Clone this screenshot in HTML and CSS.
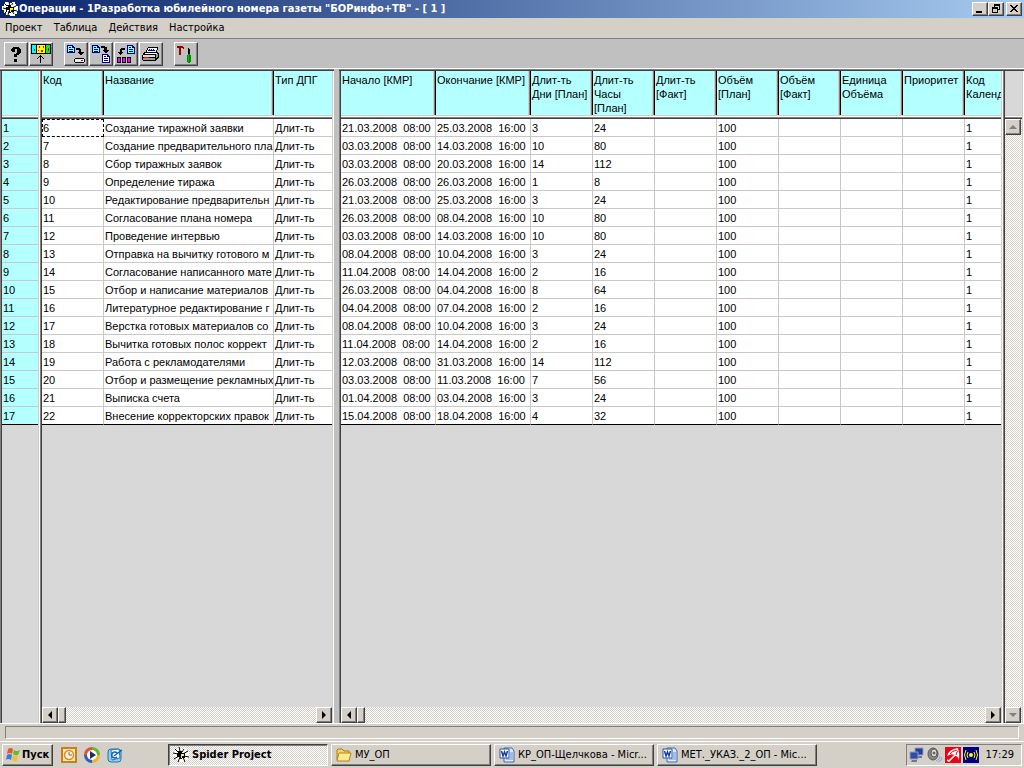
FILE: index.html
```html
<!DOCTYPE html>
<html lang="ru">
<head>
<meta charset="utf-8">
<title>Операции</title>
<link rel="stylesheet" href="styles.css">
</head>
<body>
<header class="titlebar">
  <svg class="icon" viewBox="0 0 16 16"><path d="M3 1h4v1h3V1h3v2h1v2h2v5h-1v3h-2v2H8v-1H4v-2H2V9H0V5h2V3h1z" fill="#fff"/><path d="M3 3l3 3M7 1l1 4M11 2L9 5M14 5l-4 2M1 7l4 1M3 12l3-3M6 14l1-4M12 13l-2-3M15 10l-4-1" stroke="#000"/><path d="M5 4h4v2h3v5H9v1H7v-2H4V6h1z"/><path d="M8 7h3v2H9v2H8z" fill="#ff0"/><path d="M5 5h1v1H5zM9 4h1v1H9zM5 9h2v1H5z" fill="#fff"/></svg>
  <h1 class="title">Операции - 1Разработка юбилейного номера газеты "БОРинфо+ТВ" - [ 1 ]</h1>
  <div class="window-buttons">
    <button class="win" aria-label="Свернуть"><svg viewBox="0 0 12 10"><path d="M2 7h6v2H2z"/></svg></button>
    <button class="win" aria-label="Восстановить"><svg viewBox="0 0 12 10"><path d="M4 0h6v6H8V5h1V2H5v1H4zM2 3h6v6H2zM3 5v3h4V5z" fill-rule="evenodd"/></svg></button>
    <button class="win close" aria-label="Закрыть"><svg viewBox="0 0 12 10"><path d="M2 1h2v1h1v1h2V2h1V1h2v1H9v1H8v1H7v1h1v1h1v1h1v1H8V7H7V6H5v1H4v1H2V7h1V6h1V5h1V4H4V3H3V2H2z"/></svg></button>
  </div>
</header>
<nav class="menu">
  <button>Проект</button><button>Таблица</button><button>Действия</button><button>Настройка</button>
</nav>
<div class="toolbar">
  <div class="group">
    <button class="tool" aria-label="Справка"><svg viewBox="0 0 20 20"><path d="M7 3h6v1h1v1h1v4h-1v1h-1v1h-2v2H8v-3h2V9h1V5H9v3H6V7H5V5h1V4h1zM8 15h3v3H8z"/></svg></button>
    <button class="tool" aria-label="Столбцы"><svg viewBox="0 0 20 20"><path d="M0 0h20v10H0z"/><path d="M1 1h4v8H1z" fill="#0ff"/><path d="M6 1h8v8H6z" fill="#ff0"/><path d="M15 1h4v8h-4z" fill="#0e3"/><path d="M3 5h1v2H3zM8 2h1v2H8zM12 2h1v2h-1zM7 6h1v1H7zM10 6h2v2h-2zM17 4h1v3h-1z" fill="#e00"/><path d="M9 11h1v1h1v1h1v1h1v1h-1v-1h-1v-1h-1v6H9v-6H8v1H7v1H6v-1h1v-1h1v-1h1z"/></svg></button>
  </div>
  <div class="group">
    <button class="tool" aria-label="Сохранить"><svg viewBox="0 0 20 20"><path d="M1 1h6v1h1v1h1v6H1z" fill="#008"/><path d="M2 2h4v2h2v4H2z" fill="#8ff"/><path d="M3 3h2v1H3zM3 5h4v1H3zM3 7h4v1H3z" fill="#008"/><path d="M10 4h4v1h1v3h3v1h-1v1h-1v1h-2v-1h-1V9h-1V8h1V6h-3z"/><path d="M9 14h9v1h1v3h-1v1H9v-1H8v-3h1z"/><path d="M9 15h9v3H9z" fill="#eee"/><path d="M15 16h2v1h-2z" fill="#c00"/></svg></button>
    <button class="tool" aria-label="Копировать"><svg viewBox="0 0 20 20"><path d="M1 1h6v1h1v1h1v6H1z" fill="#008"/><path d="M2 2h4v2h2v4H2z" fill="#8ff"/><path d="M3 3h2v1H3zM3 5h4v1H3zM3 7h4v1H3z" fill="#008"/><path d="M10 2h4v1h2v3h2v1h-1v1h-1v1h-2V8h-1V7h-1V6h1V4h-3z"/><path d="M11 10h6v1h1v1h1v7h-8z" fill="#008"/><path d="M12 11h4v2h2v5h-6z" fill="#fff"/><path d="M13 12h2v1h-2zM13 14h4v1h-4zM13 16h4v1h-4z" fill="#008"/></svg></button>
    <button class="tool" aria-label="В столбцы"><svg viewBox="0 0 20 20"><path d="M11 1h6v1h1v1h1v7h-8z" fill="#008"/><path d="M12 2h4v2h2v5h-6z" fill="#8ff"/><path d="M13 3h2v1h-2zM13 5h4v1h-4zM13 7h4v1h-4z" fill="#008"/><path d="M9 4H5v1H4v3H2v1h1v1h1v1h1v-1h1V9h1V8H6V6h3z"/><path d="M1 13h4v6H1zM6 13h4v6H6zM11 13h4v6h-4z"/><path d="M2 14h2v4H2zM7 14h2v4H7zM12 14h2v4h-2z" fill="#f0f"/></svg></button>
    <button class="tool" aria-label="Печать"><svg viewBox="0 0 20 20"><path d="M7 3h10v2h-1v3H5V6h1V4h1z" fill="#fff"/><path d="M7 3h10v1H7zM6 4h1v2H6zM5 6h1v2H5zM16 4h1v2h-1zM15 6h1v2h-1z"/><path d="M8 6V5h1v1h1V5h1v1h1V5h1v1h1v1H7V6z" fill="#00a"/><path d="M3 8h14v1h1v5h-1v1h-1v1h-1v1H2v-1H1v-5h1V9h1z"/><path d="M4 9h12v1H3z" fill="#fff"/><path d="M2 11h12v2H2z" fill="#ddd"/><path d="M2 14h12v2H2zM15 10h2v3h-1v1h-1z" fill="#999"/><path d="M3 13h5v1H3z" fill="#e00"/></svg></button>
  </div>
  <div class="group">
    <button class="tool" aria-label="Инструменты"><svg viewBox="0 0 20 20"><path d="M1 2h6v1h1v2H7V4H5v7H3V4H1z" fill="#900"/><path d="M12 4h1v1h1v5h-2z"/><path d="M12 10h2v1h1v7h-1v1h-2v-1h-1v-7h1z" fill="#080"/><path d="M12 11h1v7h-1z" fill="#0b0"/></svg></button>
  </div>
</div>
<main class="sheet">
  <section class="pane"><table class="grid numbers"><thead><tr><th scope="col"></th></tr></thead><tbody id="numbers"></tbody></table></section>
  <section class="pane">
    <table class="grid"><colgroup><col class="code"><col class="name"><col></colgroup>
      <thead><tr><th>Код</th><th>Название</th><th>Тип ДПГ</th></tr></thead><tbody id="names"></tbody></table>
    <div class="hscroll"><button class="sb" aria-label="Влево"><i class="left"></i></button><span class="thumb"></span><button class="sb end" aria-label="Вправо"><i class="right"></i></button></div>
  </section>
  <div class="splitter"></div>
  <section class="pane">
    <table class="grid"><colgroup><col class="date"><col class="date"><col class="code"><col class="code"><col class="code"><col class="code"><col class="code"><col class="code"><col class="code"><col></colgroup>
      <thead><tr><th>Начало [КМР]</th><th>Окончание [КМР]</th><th>Длит-ть<br>Дни [План]</th><th>Длит-ть<br>Часы<br>[План]</th><th>Длит-ть<br>[Факт]</th><th>Объём<br>[План]</th><th>Объём<br>[Факт]</th><th>Единица<br>Объёма</th><th>Приоритет</th><th>Код<br>Календ</th></tr></thead><tbody id="values"></tbody></table>
    <div class="hscroll"><button class="sb" aria-label="Влево"><i class="left"></i></button><span class="thumb"></span><button class="sb end" aria-label="Вправо"><i class="right"></i></button></div>
  </section>
  <div class="pane side"><div class="corner"></div><div class="vscroll"><button class="sb" aria-label="Вверх"><i class="up"></i></button><button class="sb" aria-label="Вниз"><i class="down"></i></button></div></div>
</main>
<div class="status"><div class="status-panel"></div></div>
<footer class="taskbar">
  <button class="start"><svg class="icon" viewBox="0 0 16 16"><path d="M3 2q3-2 5 0L7 7Q5 5 2 7z" fill="#e8542c"/><path d="M9 3q3 2 6 0l-2 5q-3 1-5-1z" fill="#6cb52d"/><path d="M2 8q3-2 5 0l-1 5q-3-2-5 0z" fill="#3a7be0"/><path d="M8 8q2 2 5 1l-1 5q-3 1-5-1z" fill="#f5c024"/></svg>Пуск</button>
  <div class="quick">
    <button aria-label="Outlook"><svg class="icon" viewBox="0 0 16 16"><path d="M1 1h14v14H1z" fill="#ffe9b0" stroke="#cf7c1b" stroke-width="2"/><circle cx="8" cy="8" r="4.500" fill="#fff7dc" stroke="#d68b2d" stroke-width="1.500"/><path d="M8 5v3h3" fill="none" stroke="#a65a10"/></svg></button>
    <button aria-label="Media Player"><svg class="icon" viewBox="0 0 16 16"><path d="M8 8V0a8 8 0 0 1 8 8z" fill="#6ab42b"/><path d="M8 8h8a8 8 0 0 1-8 8z" fill="#f2b51f"/><path d="M8 8v8a8 8 0 0 1-8-8z" fill="#2860c8"/><path d="M8 8H0a8 8 0 0 1 8-8z" fill="#e4522b"/><circle cx="8" cy="8" r="5" fill="#fff"/><path d="M6 4l6 4-6 4z" fill="#222f5a"/></svg></button>
    <button aria-label="Рабочий стол"><svg class="icon" viewBox="0 0 16 16"><rect x="1" y="2" width="13" height="13" rx="3" fill="#8fcdf5" stroke="#2074b9"/><path d="M4 3l8-1 1 9-8 2z" fill="#fff" stroke="#2678bc"/><path d="M10 6a3 3 0 1 0 0 4M7 9l8-6" fill="none" stroke="#1763a8" stroke-width="1.500"/></svg></button>
  </div>
  <div class="tasks">
    <button class="task active"><svg class="icon" viewBox="0 0 16 16"><path d="M4 1h3v1h3V1h3v2h1v2h2v5h-1v3h-2v2H8v-1H4v-2H2V9H0V5h2V3h2z" fill="#fff"/><path d="M2 2l3 3M6 0l1 4M11 2L9 5M15 4l-5 3M0 6l5 1M1 12l5-3M5 15l2-5M12 15l-2-5M16 10l-5-1" stroke="#000"/><path d="M5 4h4v2h3v5H9v1H7v-2H4V6h1z"/><path d="M8 7h3v2H9v2H8z" fill="#ff0"/></svg><span>Spider Project</span></button>
    <button class="task"><svg class="icon" viewBox="0 0 16 16"><path d="M1 3l1-1h4l2 2h5v9H1z" fill="#f6d565" stroke="#a87a12"/><path d="M3 6h12l-2 8H1z" fill="#ffea8c" stroke="#b1851a"/></svg><span>МУ_ОП</span></button>
    <button class="task"><svg class="icon" viewBox="0 0 16 16"><path d="M5 1h8l2 3v11H5z" fill="#dfeaff" stroke="#4169b0"/><path d="M11 6h3M11 8h3M11 10h3M7 12h7" stroke="#6d8fce"/><path d="M1 2h9v9H1z" fill="#fff" stroke="#2753ac"/><path d="M2.500 4l1.500 5 1.500-4L7 9l1.500-5" fill="none" stroke="#183f94" stroke-width="1.500"/></svg><span>КР_ОП-Щелчкова - Micr...</span></button>
    <button class="task"><svg class="icon" viewBox="0 0 16 16"><path d="M5 1h8l2 3v11H5z" fill="#dfeaff" stroke="#4169b0"/><path d="M11 6h3M11 8h3M11 10h3M7 12h7" stroke="#6d8fce"/><path d="M1 2h9v9H1z" fill="#fff" stroke="#2753ac"/><path d="M2.500 4l1.500 5 1.500-4L7 9l1.500-5" fill="none" stroke="#183f94" stroke-width="1.500"/></svg><span>МЕТ._УКАЗ._2_ОП - Mic...</span></button>
  </div>
  <div class="tray">
    <svg class="icon" viewBox="0 0 16 16"><path d="M6 1h8v7H6z" fill="#253d9a" stroke="#8e9cc0"/><path d="M9 9h4v2H9z" fill="#777"/><path d="M1 5h8v7H1z" fill="#304cac" stroke="#8e9cc0"/><path d="M3 13h5v2H2z" fill="#777"/></svg>
    <svg class="icon" viewBox="0 0 16 16"><ellipse cx="6" cy="7" rx="5" ry="6" fill="#888" stroke="#555"/><ellipse cx="7" cy="6" rx="3" ry="4" fill="#ddd" stroke="#555"/><circle cx="7" cy="6" r="1.500" fill="#666"/><path d="M9 14q4-1 4-5M11 15q4-1 4-5" fill="none" stroke="#8aa3ea"/></svg>
    <svg class="icon" viewBox="0 0 16 16"><path d="M0 0h16v16H0z" fill="#e30613"/><path d="M2 9Q4 2 13 1Q15 7 14 13Q13 9 10 9L9 8Q7 6 2 9z" fill="#fff"/><path d="M10 8l-6 6-2-1" fill="none" stroke="#fff" stroke-width="1.500"/><path d="M12 3Q7 4 5 7M13 4Q11 6 11 8" fill="none" stroke="#e30613"/></svg>
    <svg class="icon" viewBox="0 0 16 16"><path d="M0 0h16v16H0z" fill="#000080"/><circle cx="8" cy="8" r="2" fill="#ff0"/><path d="M5 5q-2 3 0 6M11 5q2 3 0 6M3 3q-3 5 0 10M13 3q3 5 0 10" fill="none" stroke="#ff0"/></svg>
    <time>17:29</time>
  </div>
</footer>
<script src="table.js"></script>
</body>
</html>
```
FILE: styles.css
```css
* { box-sizing: border-box; }
html, body { height: 100%; }
body { margin: 0; display: flex; flex-direction: column; overflow: hidden; background: #d4d0c8; color: #000; font: 11px/14px "DejaVu Sans Condensed", "DejaVu Sans", sans-serif; }
button { font: inherit; color: inherit; padding: 0; margin: 0; border: 0; background: none; }
svg { display: block; flex: none; }
.icon { width: 16px; height: 16px; }
.titlebar { display: flex; align-items: center; gap: 1px; height: 18px; flex: none; padding: 0 2px; background: linear-gradient(90deg, #0a246a, #a6caf0); color: #fff; }
.title { margin: 0; flex: 1; font-size: 11px; font-weight: bold; white-space: nowrap; }
.window-buttons { display: flex; }
.win, .sb, .tool, .start, .task { border: 1px solid; border-color: #fff #404040 #404040 #fff; box-shadow: inset -1px -1px #808080; background: #d4d0c8; }
.win { width: 16px; height: 14px; }
.win svg { width: 12px; height: 10px; margin-left: 1px; shape-rendering: crispEdges; }
.close { margin-left: 2px; }
.menu { display: flex; gap: 11px; flex: none; height: 21px; padding: 0 5px; border-bottom: 1px solid #808080; }
.toolbar { display: flex; gap: 11px; flex: none; height: 29px; padding: 3px 4px 2px; background: #c0c0c0; }
.group { display: flex; gap: 1px; }
.tool { display: grid; place-items: center; width: 24px; height: 24px; background: #c0c0c0; }
.tool svg { width: 20px; height: 20px; shape-rendering: crispEdges; }

.sheet { flex: 1; min-height: 0; display: grid; grid-template-columns: 40px 294px 5px minmax(0, 1fr) 21px; border-bottom: 1px solid #fff; font-family: "Liberation Sans", Arial, sans-serif; }
.pane { display: flex; flex-direction: column; min-width: 0; overflow: hidden; padding: 3px 2px 0;
  background: linear-gradient(#fff 1px, #808080 1px 2px, #404040 2px) top / 100% 3px no-repeat, linear-gradient(90deg, #808080 1px, #404040 1px) left / 2px 100% no-repeat, linear-gradient(90deg, #d4d0c8 1px, #fff 1px) right / 2px 100% no-repeat, #d8d8d8; }
.splitter { border-top: 1px solid #fff; background: #c0c0c0; }
.grid { width: 100%; table-layout: fixed; border-collapse: separate; border-spacing: 0; }
.code { width: 62px; }
.name { width: 170px; }
.date { width: 95px; }
th, .corner { height: 48px; background: linear-gradient(#d4d0c8 1px, #fff 1px 2px, #808080 2px 3px, #404040 3px) bottom / 100% 4px no-repeat; }
th { padding: 2px 0 4px 1px; font-weight: normal; text-align: left; vertical-align: top; overflow: hidden; white-space: nowrap;
  background: linear-gradient(#d4d0c8 1px, #fff 1px 2px, #808080 2px 3px, #404040 3px) bottom / 100% 4px no-repeat, linear-gradient(90deg, #d4d0c8 1px, #808080 1px 2px, #000 2px) right / 3px 100% no-repeat, #b4ffff; }
th:last-child { background: linear-gradient(#d4d0c8 1px, #fff 1px 2px, #808080 2px 3px, #404040 3px) bottom / 100% 4px no-repeat, #b4ffff; }
td { height: 18px; padding: 1px 0 0 1px; line-height: 16px; overflow: hidden; white-space: pre; background: #fff; border: 0 solid #c8c8c8; border-width: 0 1px 1px 0; }
td:last-child { border-right: 0; }
tr:last-child td { border-bottom-color: #000; }
.numbers td { background: #b4ffff; }
.current { padding: 0; border: 1px dashed #000; }
.hscroll, .vscroll { display: flex; background: repeating-conic-gradient(#fff 0 25%, #d4d0c8 0 50%) 0 0 / 2px 2px; }
.hscroll { height: 16px; margin-top: auto; }
.vscroll { flex: 1; flex-direction: column; justify-content: space-between; }
.sb { display: grid; place-items: center; width: 16px; height: 16px; }
.end { margin-left: auto; }
.thumb { width: 8px; border: 1px solid; border-color: #fff #404040 #404040 #fff; box-shadow: inset -1px -1px #808080; background: #d4d0c8; }
.sb i { border: 4px solid transparent; }
.sb .left { border-right-color: #000; border-left-width: 0; }
.sb .right { border-left-color: #000; border-right-width: 0; }
.sb .up { border-bottom-color: #808080; border-top-width: 0; }
.sb .down { border-top-color: #808080; border-bottom-width: 0; }

.status { flex: none; height: 17px; padding: 2px 5px; }
.status-panel { height: 13px; border: 1px solid; border-color: #808080 #fff #fff #808080; }
.taskbar { display: flex; flex: none; height: 27px; padding: 2px; border-top: 1px solid #fff; }
.start { display: flex; align-items: center; gap: 1px; width: 51px; height: 22px; padding: 0 2px; font-weight: bold; }
.quick { display: flex; align-items: center; gap: 7px; height: 22px; padding: 0 45px 0 8px; }
.tasks { display: flex; flex: 1; gap: 3px; min-width: 0; }
.task { display: flex; align-items: center; gap: 3px; flex: 0 1 160px; min-width: 0; height: 22px; padding: 0 4px; white-space: nowrap; overflow: hidden; }
.active { font-weight: bold; border-color: #404040 #fff #fff #404040; box-shadow: inset 1px 1px #808080; background: repeating-conic-gradient(#fff 0 25%, #d4d0c8 0 50%) 0 0 / 2px 2px; }
.tray { display: flex; align-items: center; gap: 2px; height: 22px; padding: 0 7px 0 2px; border: 1px solid; border-color: #808080 #fff #fff #808080; }
.tray time { padding-left: 4px; }
```
FILE: table.js
```js
const rows = [
  ["6", "Создание тиражной заявки", "21.03.2008  08:00", "25.03.2008  16:00", 3, 24],
  ["7", "Создание предварительного пла", "03.03.2008  08:00", "14.03.2008  16:00", 10, 80],
  ["8", "Сбор тиражных заявок", "03.03.2008  08:00", "20.03.2008  16:00", 14, 112],
  ["9", "Определение тиража", "26.03.2008  08:00", "26.03.2008  16:00", 1, 8],
  ["10", "Редактирование предварительн", "21.03.2008  08:00", "25.03.2008  16:00", 3, 24],
  ["11", "Согласование плана номера", "26.03.2008  08:00", "08.04.2008  16:00", 10, 80],
  ["12", "Проведение интервью", "03.03.2008  08:00", "14.03.2008  16:00", 10, 80],
  ["13", "Отправка на вычитку готового м", "08.04.2008  08:00", "10.04.2008  16:00", 3, 24],
  ["14", "Согласование написанного мате", "11.04.2008  08:00", "14.04.2008  16:00", 2, 16],
  ["15", "Отбор и написание материалов", "26.03.2008  08:00", "04.04.2008  16:00", 8, 64],
  ["16", "Литературное редактирование г", "04.04.2008  08:00", "07.04.2008  16:00", 2, 16],
  ["17", "Верстка готовых материалов со", "08.04.2008  08:00", "10.04.2008  16:00", 3, 24],
  ["18", "Вычитка готовых полос коррект", "11.04.2008  08:00", "14.04.2008  16:00", 2, 16],
  ["19", "Работа с рекламодателями", "12.03.2008  08:00", "31.03.2008  16:00", 14, 112],
  ["20", "Отбор и размещение рекламных", "03.03.2008  08:00", "11.03.2008  16:00", 7, 56],
  ["21", "Выписка счета", "01.04.2008  08:00", "03.04.2008  16:00", 3, 24],
  ["22", "Внесение корректорских правок", "15.04.2008  08:00", "18.04.2008  16:00", 4, 32]
];

function fill(id, cellsOf) {
  const body = document.getElementById(id);
  rows.forEach((row, index) => {
    const tr = body.insertRow();
    cellsOf(row, index).forEach(text => { tr.insertCell().textContent = text; });
  });
}

fill("numbers", (row, index) => [index + 1]);
fill("names", row => [row[0], row[1], "Длит-ть"]);
fill("values", row => [row[2], row[3], row[4], row[5], "", 100, "", "", "", 1]);
document.querySelector("#names td").className = "current";
```
